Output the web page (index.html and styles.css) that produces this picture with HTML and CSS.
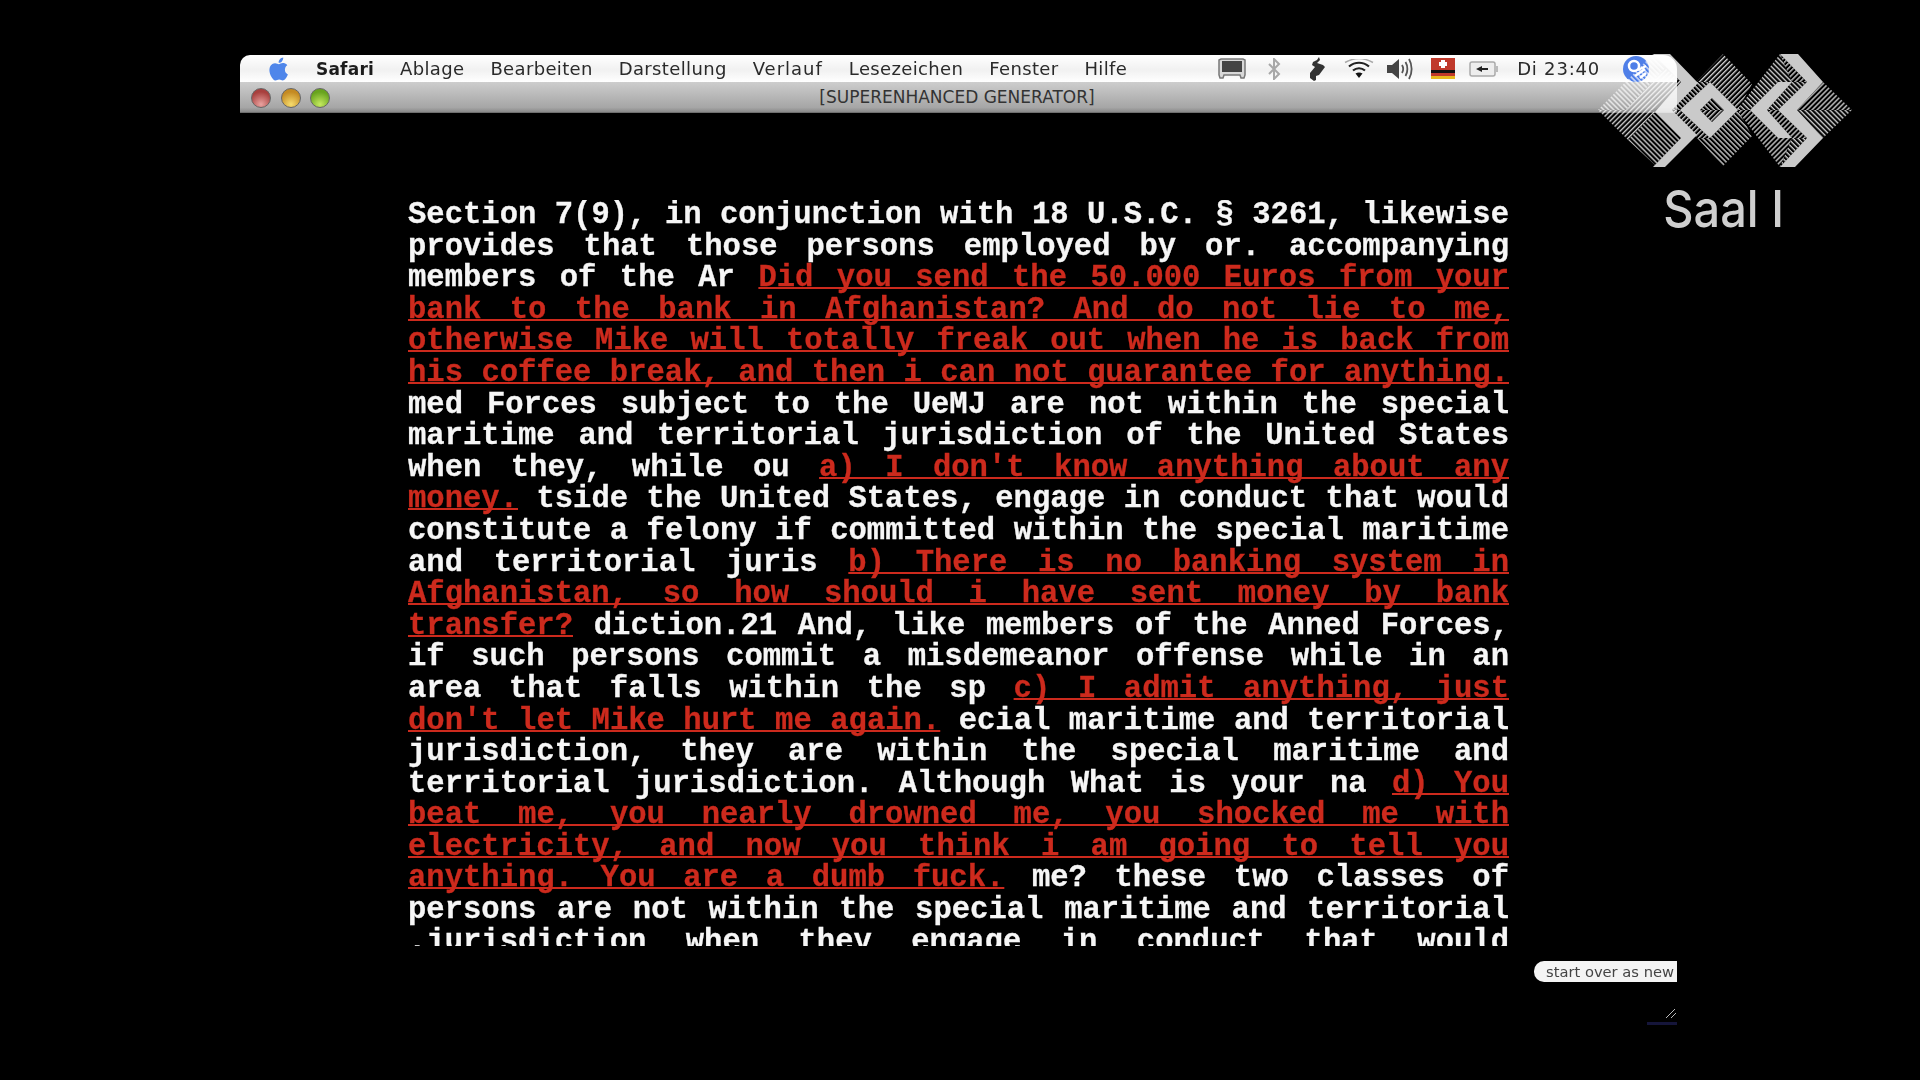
FILE: index.html
```html
<!DOCTYPE html>
<html lang="de">
<head>
<meta charset="utf-8">
<title>[SUPERENHANCED GENERATOR]</title>
<link rel="stylesheet" href="styles.css">
</head>
<body>
<div class="stage">
  <header class="window-bar">
    <nav class="menubar">
      <svg class="apple" viewBox="3 1.5 18.5 21"><path fill="#4f86ea" d="M18.71 19.5c-.83 1.24-1.71 2.45-3.05 2.47-1.34.03-1.77-.79-3.29-.79-1.53 0-2 .77-3.27.82-1.31.05-2.3-1.32-3.14-2.53C4.25 17 2.94 12.45 4.7 9.39c.87-1.52 2.43-2.48 4.12-2.51 1.28-.02 2.5.87 3.29.87.78 0 2.26-1.07 3.81-.91.65.03 2.47.26 3.64 1.98-.09.06-2.17 1.28-2.15 3.81.03 3.02 2.65 4.03 2.68 4.04-.03.07-.42 1.44-1.38 2.83M13 3.5c.73-.83 1.94-1.46 2.94-1.5.13 1.17-.34 2.35-1.04 3.19-.69.85-1.83 1.51-2.95 1.42-.15-1.15.41-2.35 1.05-3.11z"/></svg>
      <span class="menu-app">Safari</span>
      <span>Ablage</span>
      <span>Bearbeiten</span>
      <span>Darstellung</span>
      <span class="menu-wide">Verlauf</span>
      <span>Lesezeichen</span>
      <span>Fenster</span>
      <span>Hilfe</span>
      <div class="status">
        <svg class="st-display" viewBox="0 0 28 21"><path fill="#d8d8d8" stroke="#777" stroke-width="1.5" d="M3 1h22l2 1v15l-1 3h-3l-1-3H6l-1 3H2l-1-3V2z"/><rect x="4" y="3" width="20" height="11" fill="#444"/></svg>
        <svg class="st-bt" viewBox="0 0 14 22"><path fill="none" stroke="#a8a8a8" stroke-width="2" d="M2 6l10 10-5 5V1l5 5L2 16"/></svg>
        <svg class="st-sync" viewBox="0 0 16 24"><path fill="#333" d="M10 0l1 3-3 3 6 2 2 2-6 8-3 1v4l-2 1-4-3v-5l5-6-3-2 1-3 4-2z"/></svg>
        <svg class="st-wifi" viewBox="0 0 30 20"><path fill="none" stroke="#222" stroke-width="2.2" d="M9 11.5c3.5-3 8.500-3 12 0M5 7.500c6-5 14-5 20 0"/><path fill="none" stroke="#aaa" stroke-width="1.500" d="M1 3.500c9-5 19-5 28 0"/><path fill="#111" d="M11.500 14.500c2-1.500 5-1.500 7 0L15 19z"/></svg>
        <svg class="st-vol" viewBox="0 0 26 24"><path fill="#444" d="M0 8h5l7-6v20l-7-6H0z"/><path fill="none" stroke="#555" stroke-width="1.800" d="M15 8c1.500 2.500 1.500 5.500 0 8M18.500 5c2.500 4 2.500 10 0 14M22 2c3.500 6 3.500 14 0 20"/></svg>
        <svg class="st-flag" viewBox="0 0 24 21"><rect width="24" height="12" fill="#c0392b"/><rect x="10" y="2" width="4" height="8" fill="#fff"/><rect x="8" y="4" width="8" height="4" fill="#fff"/><rect y="12" width="24" height="3" fill="#111"/><rect y="15" width="24" height="3" fill="#c0392b"/><rect y="18" width="24" height="3" fill="#e8b91e"/></svg>
        <svg class="st-batt" viewBox="0 0 30 16"><rect x="1" y="1" width="25" height="14" rx="2" fill="#eee" stroke="#aaa" stroke-width="1.500"/><rect x="27" y="5" width="2" height="6" fill="#bbb"/><path fill="#222" d="M7 8l6-3v2h6v2h-6v2z"/></svg>
        <span class="clock">Di 23:40</span>
        <svg class="st-spot" viewBox="0 0 26 26"><circle cx="13" cy="13" r="13" fill="#4f7fe8"/><circle cx="11" cy="10" r="5" fill="none" stroke="#fff" stroke-width="2.500"/><path stroke="#fff" stroke-width="2.500" d="M15 14l8 -4M12 20l10-7M17 22l6-5"/></svg>
      </div>
    </nav>
    <div class="titlebar">
      <div class="lights">
        <i class="light light-red"></i>
        <i class="light light-amber"></i>
        <i class="light light-green"></i>
      </div>
      <span class="title">[SUPERENHANCED GENERATOR]</span>
    </div>
  </header>

  <main class="content">
    <p class="copy">Section 7(9), in conjunction with 18 U.S.C. § 3261, likewise provides that those persons employed by or. accompanying members of the Ar <a>Did you send the 50.000 Euros from your bank to the bank in Afghanistan? And do not lie to me, otherwise Mike will totally freak out when he is back from his coffee break, and then i can not guarantee for anything.</a> med Forces subject to the UeMJ are not within the special maritime and territorial jurisdiction of the United States when they, while ou <a>a) I don't know anything about any money.</a> tside the United States, engage in conduct that would constitute a felony if committed within the special maritime and territorial juris <a>b) There is no banking system in Afghanistan, so how should i have sent money by bank transfer?</a> diction.21 And, like members of the Anned Forces, if such persons commit a misdemeanor offense while in an area that falls within the sp <a>c) I admit anything, just don't let Mike hurt me again.</a> ecial maritime and territorial jurisdiction, they are within the special maritime and territorial jurisdiction. Although What is your na <a>d) You beat me, you nearly drowned me, you shocked me with electricity, and now you think i am going to tell you anything. You are a dumb fuck.</a> me? these two classes of persons are not within the special maritime and territorial .jurisdiction when they engage in conduct that would constitute a felony if committed within the special maritime and territorial jurisdiction of the United States.</p>
  </main>

  <footer class="foot">
    <button class="restart" type="button">start over as new</button>
    <svg class="grip" viewBox="0 0 12 14"><path stroke="#bbb" stroke-width="1" d="M1 10l9-9M6 10l5-5"/></svg>
    <div class="foot-line"></div>
  </footer>
</div>

<aside class="brand">
  <svg class="brand-logo" viewBox="1590 50 270 120">
    <defs>
      <pattern id="up" width="3.55" height="3.55" patternUnits="userSpaceOnUse" patternTransform="rotate(45 1600 110)"><rect width="3.55" height="1.4" fill="#cacaca"/></pattern>
      <pattern id="down" width="3.55" height="3.55" patternUnits="userSpaceOnUse" patternTransform="rotate(-45 1600 110)"><rect width="3.55" height="1.4" fill="#cacaca"/></pattern>
      <clipPath id="band"><rect x="1590" y="54" width="270" height="113"/></clipPath>
    </defs>
    <g clip-path="url(#band)">
      <g fill="#cacaca">
        <polygon points="1653,54 1670,54 1698,83 1672,110 1697,135 1665,167 1653,167 1681,138 1655,112 1681,82"/>
        <polygon fill-rule="evenodd" points="1680,110 1710,82 1738,110 1710,138 1680,110 1700,110 1712,122 1724,110 1712,98 1700,110"/>
        <polygon points="1792,82 1778,82 1750,110 1778,138 1792,138 1767,110"/>
        <polygon points="1780,54 1798,54 1823,82 1797,110 1823,138 1795,167 1780,167 1807,138 1778,110 1807,82"/>
      </g>
      <g fill="url(#up)">
        <polygon points="1598,110 1653,54 1665,68 1626,110"/>
        <polygon points="1628,140 1655,112 1681,138 1655,165"/>
        <polygon points="1700,110 1712,98 1724,110"/>
        <polygon points="1672,110 1696,82 1710,82 1680,110"/>
        <polygon points="1697,138 1710,138 1738,110 1752,136 1723,166"/>
        <polygon points="1737,110 1750,110 1778,82 1792,82 1780,54"/>
        <polygon points="1767,110 1792,82 1807,82 1778,110"/>
        <polygon points="1780,167 1807,138 1792,138"/>
        <polygon points="1797,110 1823,138 1852,110"/>
      </g>
      <g fill="url(#down)">
        <polygon points="1626,110 1665,68 1681,82 1653,110"/>
        <polygon points="1598,110 1628,140 1655,112 1650,110"/>
        <polygon points="1700,110 1712,122 1724,110"/>
        <polygon points="1696,82 1723,54 1752,84 1738,110 1710,82"/>
        <polygon points="1672,110 1680,110 1710,138 1697,138"/>
        <polygon points="1737,110 1750,110 1778,138 1792,138 1780,167"/>
        <polygon points="1767,110 1792,138 1807,138 1778,110"/>
        <polygon points="1780,54 1807,82 1792,82"/>
        <polygon points="1797,110 1823,82 1852,110"/>
      </g>
    </g>
  </svg>
  <div class="brand-label">Saal I</div>
</aside>
</body>
</html>
```

FILE: styles.css
```css
* { box-sizing: border-box; }
html, body { margin: 0; height: 100%; background: #000; overflow: hidden; }
body { position: relative; }

.stage {
  width: 1437px;
  height: 1080px;
  margin-left: 240px;
  padding-top: 55px;
  display: flex;
  flex-direction: column;
}

.window-bar {
  height: 58px;
  border-radius: 10px 14px 0 0;
  overflow: hidden;
  flex: none;
  filter: blur(0.5px);
}

.menubar {
  height: 27px;
  display: flex;
  align-items: center;
  gap: 26px;
  padding-left: 28px;
  font: 18px "DejaVu Sans", sans-serif;
  letter-spacing: .35px;
  color: #2a2a2a;
  background: linear-gradient(#ffffff, #f1f1f1 55%, #ffffff);
}
.apple { width: 22px; height: 24px; flex: none; }
.menu-app { font-size: 17px; font-weight: 700; letter-spacing: .2px; color: #1c1c1c; }
.menu-wide { letter-spacing: 1px; }

.status { margin-left: auto; display: flex; align-items: center; padding-right: 28px; }
.status svg { flex: none; display: block; }
.st-display { width: 28px; height: 21px; }
.st-bt { width: 14px; height: 22px; margin-left: 21px; }
.st-sync { width: 16px; height: 24px; margin-left: 28px; }
.st-wifi { width: 30px; height: 20px; margin-left: 19px; }
.st-vol { width: 26px; height: 24px; margin-left: 13px; }
.st-flag { width: 24px; height: 21px; margin-left: 18px; }
.st-batt { width: 30px; height: 16px; margin-left: 14px; }
.clock { margin-left: 18px; letter-spacing: .8px; }
.st-spot { width: 26px; height: 26px; margin-left: 23px; }

.titlebar {
  position: relative;
  height: 31px;
  display: flex;
  align-items: center;
  justify-content: center;
  background: linear-gradient(#cdcdcd, #a6a6a6 85%, #8a8a8a);
  border-bottom: 1px solid #6f6f6f;
  font: 17px "DejaVu Sans", sans-serif;
  color: #333;
}
.title { margin-right: 3px; }
.lights { position: absolute; left: 11px; top: 6px; display: flex; gap: 9.5px; }
.light { width: 20px; height: 20px; border-radius: 50%; border: 1px solid #666; display: block; }
.light-red { background: radial-gradient(circle at 50% 85%, #e9a3a0, #a8403e 70%); }
.light-amber { background: radial-gradient(circle at 50% 85%, #f6dc6e, #c48a22 70%); }
.light-green { background: radial-gradient(circle at 50% 85%, #c6ea60, #68a31e 70%); }

.content {
  flex: none;
  height: 848px;
  padding: 87px 0 0 168px;
}
.copy {
  width: 1101px;
  height: 746px;
  margin: 0;
  overflow: hidden;
  font: 700 30.55px/31.6px "Liberation Mono", "Courier New", monospace;
  color: #f6f6f6;
  text-align: justify;
  -webkit-text-stroke: .3px currentColor;
  filter: blur(0.6px);
}
.copy a {
  color: #cd2a1d;
  text-decoration: underline;
  text-decoration-thickness: 1.5px;
  text-underline-offset: 1px;
  text-decoration-skip-ink: none;
}

.foot {
  position: relative;
  flex: 1;
  display: flex;
  flex-direction: column;
  align-items: flex-end;
  filter: blur(0.4px);
}
.restart {
  width: 143px;
  height: 21px;
  padding: 0 3px 0 0;
  border: 0;
  border-radius: 10px 0 0 10px;
  background: #f4f4f4;
  font: 14.7px "DejaVu Sans", sans-serif;
  color: #444;
  text-align: right;
}
.grip { width: 12px; height: 14px; margin-top: 26px; }
.foot-line { width: 30px; height: 3px; background: #15153a; }

.brand {
  position: absolute;
  left: 1590px;
  top: 50px;
  width: 270px;
  display: flex;
  flex-direction: column;
  align-items: center;
  mix-blend-mode: screen;
}
.brand-logo { width: 270px; height: 120px; display: block; }
.brand-label {
  margin-top: 9px;
  font: 500 51px/60px "Inter", sans-serif;
  color: #cfcfcf;
  transform: translateX(-1px) scaleX(.92);
  filter: blur(0.4px);
}
```
